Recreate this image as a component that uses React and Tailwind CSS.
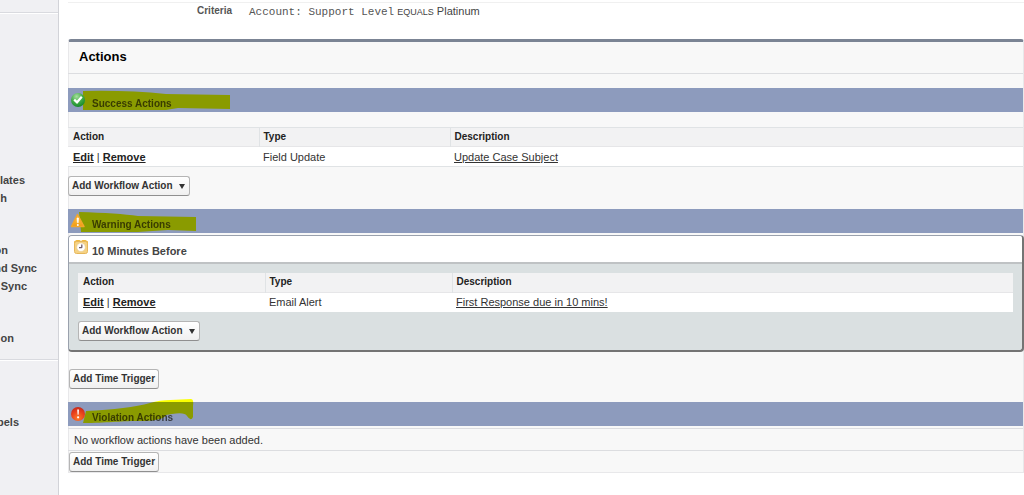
import { clsx } from 'clsx';

const sidebarGroups = [
  {
    className: 'pt-[158px]',
    items: [
      { label: 'lates', width: 'w-[25px]' },
      { label: 'h', width: 'w-[7px]' },
    ],
  },
  {
    className: 'pt-[34px]',
    items: [
      { label: 'on', width: 'w-[8px]' },
      { label: 'nd Sync', width: 'w-[37px]' },
      { label: 'Sync', width: 'w-[27px]' },
    ],
  },
  {
    className: 'pt-[34px] pb-3',
    items: [{ label: 'on', width: 'w-[14px]' }],
  },
  {
    className: 'border-t border-[#d9dadf] pt-[53px] shadow-[inset_0_1px_0_#fff]',
    items: [{ label: 'bels', width: 'w-[19px]' }],
  },
];

const successRows = [{ type: 'Field Update', description: 'Update Case Subject' }];
const warningRows = [{ type: 'Email Alert', description: 'First Response due in 10 mins!' }];

function SuccessIcon() {
  return (
    <svg viewBox="0 0 16 16" className="h-4 w-4" aria-hidden="true">
      <defs>
        <radialGradient id="green" cx="40%" cy="25%" r="75%">
          <stop offset="0" stopColor="#a8dfa0" />
          <stop offset="0.55" stopColor="#43ae48" />
          <stop offset="1" stopColor="#188a2c" />
        </radialGradient>
      </defs>
      <circle cx="8" cy="8" r="7" fill="url(#green)" />
      <path d="M4.2 7.6 7 10.3 11.8 4.8" fill="none" stroke="#fff" strokeWidth="2.2" />
    </svg>
  );
}

function WarningIcon() {
  return (
    <svg viewBox="0 0 16 16" className="h-4 w-4" aria-hidden="true">
      <defs>
        <linearGradient id="amber" x1="0" y1="0" x2="0" y2="1">
          <stop offset="0" stopColor="#ffc94d" />
          <stop offset="1" stopColor="#f09a12" />
        </linearGradient>
      </defs>
      <path
        d="M7.5 1.5 14 13.5H1.5Z"
        fill="url(#amber)"
        stroke="#f3a62a"
        strokeWidth="1.5"
        strokeLinejoin="round"
      />
      <path d="M7 5h1.6l-.3 4.8h-1Z" fill="#fff" stroke="#fff" strokeWidth=".5" />
      <circle cx="7.8" cy="11.9" r="1" fill="#fff" />
    </svg>
  );
}

function ViolationIcon() {
  return (
    <svg viewBox="0 0 16 16" className="h-4 w-4" aria-hidden="true">
      <defs>
        <radialGradient id="red" cx="50%" cy="80%" r="80%">
          <stop offset="0" stopColor="#ff7a2a" />
          <stop offset="0.6" stopColor="#e8401c" />
          <stop offset="1" stopColor="#c62a1c" />
        </radialGradient>
      </defs>
      <circle cx="8" cy="8" r="7" fill="url(#red)" />
      <path d="M7.2 3.4h1.8l-.4 5.4h-1Z" fill="#fff" />
      <circle cx="8.1" cy="11.3" r="1.1" fill="#fff" />
    </svg>
  );
}

function ClockIcon() {
  return (
    <svg viewBox="0 0 16 16" className="h-4 w-4 shrink-0" aria-hidden="true">
      <path d="M1 2.5 3.5 1h3L8 2l1.5-1h3L15 2.5V6H1Z" fill="#f0b93c" />
      <rect x="1.5" y="2.5" width="13" height="12" rx="2" fill="#f5d283" stroke="#e6b65a" />
      <circle cx="8" cy="8.2" r="4.3" fill="#fff" stroke="#e5cb93" strokeWidth=".6" />
      <path d="M8.8 5.5v3.2M6 8.7h2.8" fill="none" stroke="#6d5a67" strokeWidth="1.3" />
    </svg>
  );
}

// Marker strokes drawn over the section bars
function Highlight({ d }) {
  return (
    <svg
      viewBox="0 0 180 28"
      className="pointer-events-none absolute -top-1 left-0 h-7 w-[180px] mix-blend-multiply"
      aria-hidden="true"
    >
      <path d={d} fill="#faff00" />
    </svg>
  );
}

function SectionBar({ icon, title, mark }) {
  return (
    <div className="relative isolate flex h-6 bg-[#8d9bbd]">
      <h3 className="pt-2 pl-6 text-[10px] leading-4 font-bold text-[#3a3c42]">{title}</h3>
      <Highlight d={mark} />
      <span className="absolute top-1 left-[2px]">{icon}</span>
    </div>
  );
}

function ActionTable({ rows, bordered }) {
  const cell = 'px-1 text-left first:pl-[5px]';

  return (
    <table
      className={clsx(
        'w-full table-fixed border-collapse bg-white',
        bordered && 'border-y border-[#e0e3e5]'
      )}
    >
      <thead>
        <tr className="h-[19px] border-b border-[#e6e6e8] bg-[#f2f2f3] text-[10px] leading-4 text-[#222]">
          <th className={clsx(cell, 'w-1/5')}>Action</th>
          <th className={clsx(cell, 'w-1/5 border-l border-[#e0e3e5]')}>Type</th>
          <th className={clsx(cell, 'border-l border-[#e0e3e5]')}>Description</th>
        </tr>
      </thead>
      <tbody>
        {rows.map((row) => (
          <tr key={row.description} className="h-5 text-[11px] leading-4 text-[#333]">
            <td className={cell}>
              <a href="#edit" className="font-bold text-[#222] underline">Edit</a>
              {' | '}
              <a href="#remove" className="font-bold text-[#222] underline">Remove</a>
            </td>
            <td className={cell}>{row.type}</td>
            <td className={cell}>
              <a href="#action" className="underline">{row.description}</a>
            </td>
          </tr>
        ))}
      </tbody>
    </table>
  );
}

function Button({ children, menu }) {
  return (
    <button
      type="button"
      className="flex h-5 items-center rounded-[3px] border border-[#b5b5b5] border-b-[#8f8f8f] bg-linear-to-b from-white to-[#f0f0f0] px-[3px] text-[10px] leading-4 font-bold whitespace-nowrap text-[#333]"
    >
      {children}
      {menu && (
        <svg viewBox="0 0 6 5" className="mr-px ml-[6px] h-[5px] w-[6px]" aria-hidden="true">
          <path d="M0 0h6L3 5Z" fill="#333" />
        </svg>
      )}
    </button>
  );
}

function Sidebar() {
  return (
    <nav className="w-[59px] shrink-0 overflow-hidden border-r border-[#d2d3d8] bg-[#f0f0f3] pt-3">
      <div className="border-t border-[#d9dadf] shadow-[inset_0_1px_0_#fff]">
        {sidebarGroups.map((group, i) => (
          <ul key={i} className={group.className}>
            {group.items.map((item) => (
              <li
                key={item.label}
                className={clsx('flex h-[18px] items-center justify-end', item.width)}
              >
                <a
                  href="#setup"
                  className="text-[11px] leading-4 font-bold whitespace-nowrap text-[#444]"
                >
                  {item.label}
                </a>
              </li>
            ))}
          </ul>
        ))}
      </div>
    </nav>
  );
}

export default function App() {
  return (
    <div className="flex min-h-screen bg-white font-['Liberation_Sans',Arial,sans-serif]">
      <Sidebar />
      <main className="min-w-0 flex-1 pt-[2px] pl-[9px]">
        <div className="flex h-[37px] border-t border-[#f0f0f0] text-[11px] leading-4 text-[#444]">
          <div className="w-[164px] text-right text-[10px] font-bold text-[#555]">Criteria</div>
          <div className="pl-[17px]">
            <span className="font-['Liberation_Mono','Courier_New',monospace] text-[#555]">
              Account: Support Level
            </span>{' '}
            <span className="text-[9px]">EQUALS</span> Platinum
          </div>
        </div>

        <section className="rounded-t-[3px] border-t-[3px] border-r border-b border-l border-[#e8e8ea] border-t-[#7b8494] bg-[#f8f8f8] [&>*]:-ml-px">
          <h2 className="mb-[14px] border-b border-[#dcdde0] pt-[7px] pb-2 pl-[11px] text-[13px] leading-4 font-bold text-black">
            Actions
          </h2>

          <SectionBar
            icon={<SuccessIcon />}
            title="Success Actions"
            mark="M15 7 Q60 6 98 10 L162 11 V25 L110 24 98 26 15 26Z"
          />
          <div className="pt-[15px] pb-[13px]">
            <ActionTable rows={successRows} bordered />
            <div className="pt-[9px]">
              <Button menu>Add Workflow Action</Button>
            </div>
          </div>

          <SectionBar
            icon={<WarningIcon />}
            title="Warning Actions"
            mark="M11 7 Q50 8 70 11 L128 12 V26 L100 25 70 27 13 27Z"
          />
          <div className="mt-[2px] -mr-px overflow-hidden rounded-[4px] border border-r-2 border-b-2 border-[#9aa1ad] border-r-[#747474] border-b-[#747474] bg-[#dae0e1]">
            <div className="flex border-b-2 border-[#bfc2c4] bg-white py-[3px] pl-1">
              <ClockIcon />
              <h4 className="pt-1 pl-[3px] text-[11px] leading-4 font-bold text-[#444]">
                10 Minutes Before
              </h4>
            </div>
            <div className="p-[9px]">
              <ActionTable rows={warningRows} />
              <div className="pt-[9px]">
                <Button menu>Add Workflow Action</Button>
              </div>
            </div>
          </div>

          <div className="px-px pt-[17px] pb-[13px]">
            <Button>Add Time Trigger</Button>
          </div>

          <SectionBar
            icon={<ViolationIcon />}
            title="Violation Actions"
            mark="M18 13 Q60 11 82 5 C95 1 110 2 123 1 Q126 1 125 8 V19 Q123 24 119 18 Q117 14 104 16 L98 17 Q95 23 70 23 C50 23 40 25 15 25Z"
          />
          <p className="mt-[2px] border-y border-[#dcdde0] pt-[3px] pb-[2px] pl-[6px] text-[11px] leading-4 text-[#333]">
            No workflow actions have been added.
          </p>
          <div className="px-px pt-px">
            <Button>Add Time Trigger</Button>
          </div>
        </section>
      </main>
    </div>
  );
}
